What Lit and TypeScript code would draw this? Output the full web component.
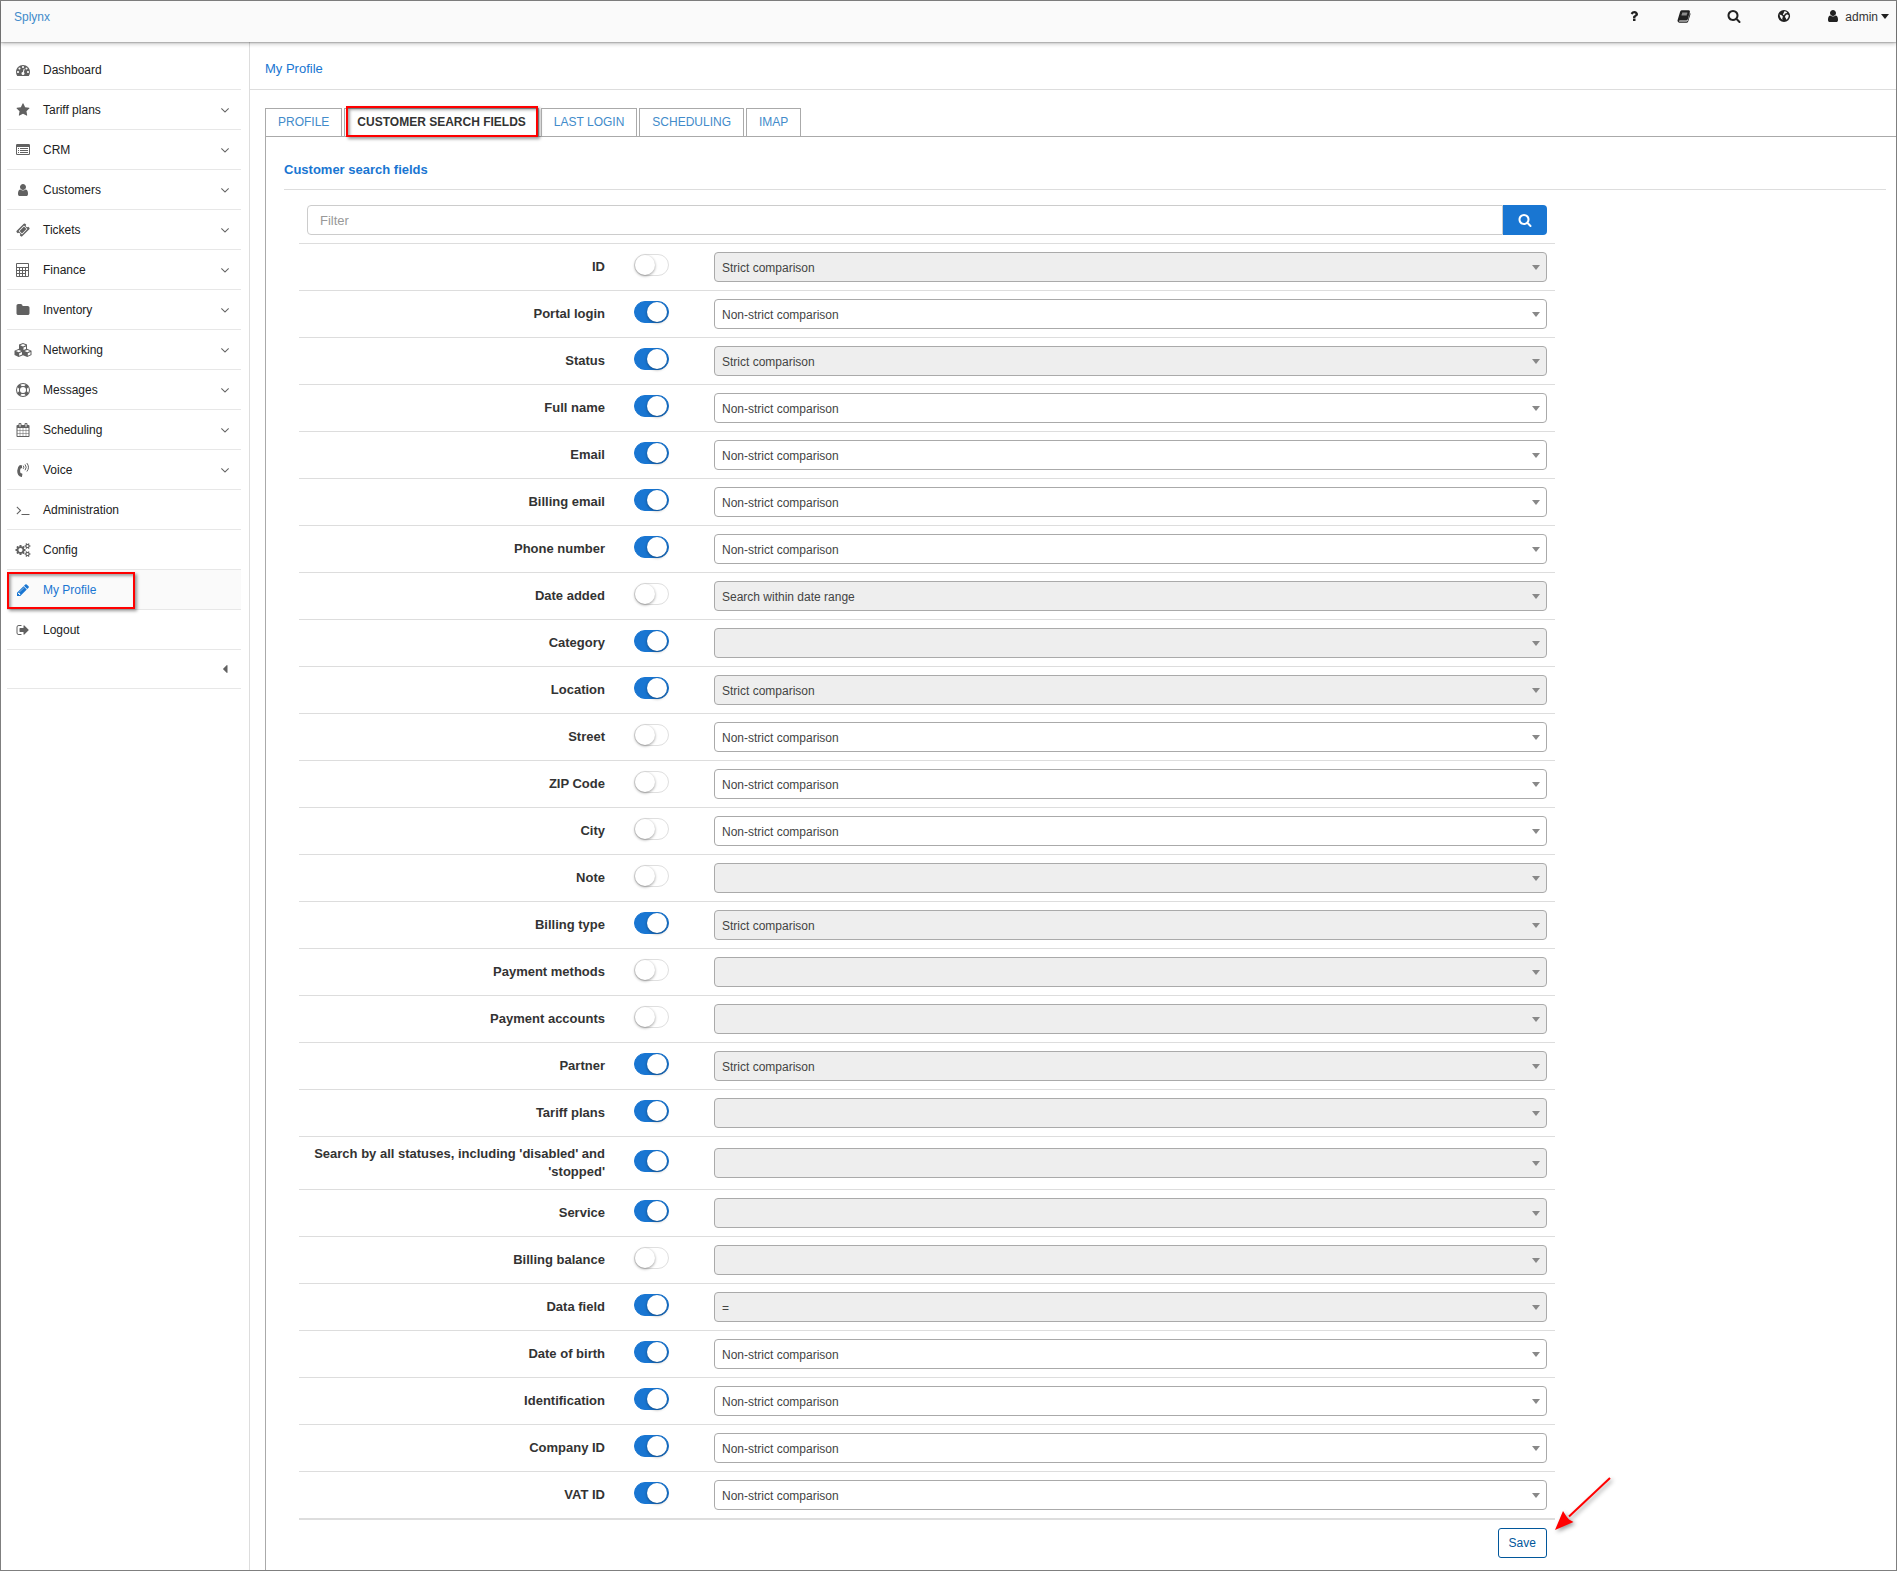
import { LitElement, html, css, svg, nothing } from "lit";
import { customElement, property, state } from "lit/decorators.js";
import { classMap } from "lit/directives/class-map.js";

type Glyph = { w: number; h: number; box: string; body: unknown };

const fa = (d: string, units = 1792): Glyph => ({
  w: units / 128,
  h: 14,
  box: `0 0 ${units} 1792`,
  body: svg`<path d=${d}></path>`,
});

const GLYPHS: Record<string, Glyph> = {
  dashboard: fa("M384 1152q0-53-37.5-90.5t-90.5-37.5-90.5 37.5-37.5 90.5 37.5 90.5 90.5 37.5 90.5-37.5 37.5-90.5zm192-448q0-53-37.5-90.5t-90.5-37.5-90.5 37.5-37.5 90.5 37.5 90.5 90.5 37.5 90.5-37.5 37.5-90.5zm428 481l101-382q6-26-7.5-48.5t-38.5-29.5-48 6.5-30 39.5l-101 382q-60 5-107 43.5t-63 98.5q-20 77 20 146t117 89 146-20 89-117q16-60-6-117t-72-91zm660-33q0-53-37.5-90.5t-90.5-37.5-90.5 37.5-37.5 90.5 37.5 90.5 90.5 37.5 90.5-37.5 37.5-90.5zm-640-640q0-53-37.5-90.5t-90.5-37.5-90.5 37.5-37.5 90.5 37.5 90.5 90.5 37.5 90.5-37.5 37.5-90.5zm448 192q0-53-37.5-90.5t-90.5-37.5-90.5 37.5-37.5 90.5 37.5 90.5 90.5 37.5 90.5-37.5 37.5-90.5zm320 448q0 261-141 483-19 29-54 29h-1402q-35 0-54-29-141-221-141-483 0-182 71-348t191-286 286-191 348-71 348 71 286 191 191 286 71 348z"),
  star: fa("M1728 647q0 22-26 48l-363 354 86 500q1 7 1 20 0 21-10.5 35.5t-30.5 14.5q-19 0-40-12l-449-236-449 236q-22 12-40 12-21 0-31.5-14.5t-10.5-35.5q0-6 2-20l86-500-364-354q-25-27-25-48 0-37 56-46l502-73 225-455q19-41 49-41t49 41l225 455 502 73q56 9 56 46z"),
  search: fa("M1216 832q0-185-131.5-316.5t-316.5-131.5-316.5 131.5-131.5 316.5 131.5 316.5 316.5 131.5 316.5-131.5 131.5-316.5zm512 832q0 52-38 90t-90 38q-54 0-90-38l-343-342q-179 124-399 124-143 0-273.5-55.5t-225-150-150-225-55.5-273.5 55.5-273.5 150-225 225-150 273.5-55.5 273.5 55.5 225 150 150 225 55.5 273.5q0 220-124 399l343 343q37 37 37 90z"),
  user: fa("M1536 1399q0 109-62.5 187t-150.5 78h-854q-88 0-150.5-78t-62.5-187q0-85 8.5-160.5t31.5-152 58.5-131 94-89 134.5-34.5q131 128 313 128t313-128q76 0 134.5 34.5t94 89 58.5 131 31.5 152 8.5 160.5zm-256-887q0 159-112.5 271.5t-271.5 112.5-271.5-112.5-112.5-271.5 112.5-271.5 271.5-112.5 271.5 112.5 112.5 271.5z"),
  folder: fa("M1728 608v704q0 92-66 158t-158 66h-1216q-92 0-158-66t-66-158v-960q0-92 66-158t158-66h320q92 0 158 66t66 158v32h672q92 0 158 66t66 158z"),
  ticket: fa("M1024 452l316 316-572 572-316-316zm-211 979l618-618q19-19 19-45t-19-45l-362-362q-18-18-45-18t-45 18l-618 618q-19 19-19 45t19 45l362 362q18 18 45 18t45-18zm889-637l-907 908q-37 37-90.5 37t-90.5-37l-126-126q56-56 56-136t-56-136-136-56-136 56l-125-126q-37-37-37-90.5t37-90.5l907-906q37-37 90.5-37t90.5 37l125 125q-56 56-56 136t56 136 136 56 136-56l126 125q37 37 37 90.5t-37 90.5z"),
  calendar: fa("M192 1664h288v-288h-288v288zm352 0h320v-288h-320v288zm-352-352h288v-320h-288v320zm352 0h320v-320h-320v320zm-352-384h288v-288h-288v288zm736 736h320v-288h-320v288zm-384-736h320v-288h-320v288zm768 736h288v-288h-288v288zm-384-352h320v-320h-320v320zm-352-864v-288q0-13-9.5-22.5t-22.5-9.5h-64q-13 0-22.5 9.5t-9.5 22.5v288q0 13 9.5 22.5t22.5 9.5h64q13 0 22.5-9.5t9.5-22.5zm736 864h288v-320h-288v320zm-384-384h320v-288h-320v288zm384 0h288v-288h-288v288zm32-480v-288q0-13-9.5-22.5t-22.5-9.5h-64q-13 0-22.5 9.5t-9.5 22.5v288q0 13 9.5 22.5t22.5 9.5h64q13 0 22.5-9.5t9.5-22.5zm384-64v1280q0 52-38 90t-90 38h-1408q-52 0-90-38t-38-90v-1280q0-52 38-90t90-38h128v-96q0-66 47-113t113-47h64q66 0 113 47t47 113v96h384v-96q0-66 47-113t113-47h64q66 0 113 47t47 113v96h128q52 0 90 38t38 90z"),
  terminal: fa("M649 983l-466 466q-10 10-23 10t-23-10l-50-50q-10-10-10-23t10-23l393-393-393-393q-10-10-10-23t10-23l50-50q10-10 23-10t23 10l466 466q10 10 10 23t-10 23zm1079 457v64q0 14-9 23t-23 9h-960q-14 0-23-9t-9-23v-64q0-14 9-23t23-9h960q14 0 23 9t9 23z"),
  cogs: fa("M832 896q0-106-75-181t-181-75-181 75-75 181 75 181 181 75 181-75 75-181zm768 512q0-52-38-90t-90-38-90 38-38 90q0 53 37.5 90.5t90.5 37.5 90.5-37.5 37.5-90.5zm0-1024q0-52-38-90t-90-38-90 38-38 90q0 53 37.5 90.5t90.5 37.5 90.5-37.5 37.5-90.5zm-384 421v185q0 10-7 19.5t-16 10.5l-155 24q-11 35-32 76 34 48 90 115 7 11 7 20 0 12-7 19-23 30-82.5 89.5t-78.5 59.5q-11 0-21-7l-115-90q-37 19-77 31-11 108-23 155-7 24-30 24h-186q-11 0-20-7.5t-10-17.5l-23-153q-34-10-75-31l-118 89q-7 7-20 7-11 0-21-8-144-133-144-160 0-9 7-19 10-14 41-53t47-61q-23-44-35-82l-152-24q-10-1-17-9.5t-7-19.5v-185q0-10 7-19.5t16-10.5l155-24q11-35 32-76-34-48-90-115-7-11-7-20 0-12 7-20 22-30 82-89t79-59q11 0 21 7l115 90q34-18 77-32 11-108 23-154 7-24 30-24h186q11 0 20 7.5t10 17.5l23 153q34 10 75 31l118-89q8-7 20-7 11 0 21 8 144 133 144 160 0 8-7 19-12 16-42 54t-45 60q23 48 34 82l152 23q10 2 17 10.5t7 19.5zm640 533v140q0 16-149 31-12 27-30 52 51 113 51 138 0 4-4 7-122 71-124 71-8 0-46-47t-52-68q-20 2-30 2t-30-2q-14 21-52 68t-46 47q-2 0-124-71-4-3-4-7 0-25 51-138-18-25-30-52-149-15-149-31v-140q0-16 149-31 13-29 30-52-51-113-51-138 0-4 4-7 4-2 35-20t59-34 30-16q8 0 46 46.5t52 67.5q20-2 30-2t30 2q51-71 92-112l6-2q4 0 124 70 4 3 4 7 0 25-51 138 17 23 30 52 149 15 149 31zm0-1024v140q0 16-149 31-12 27-30 52 51 113 51 138 0 4-4 7-122 71-124 71-8 0-46-47t-52-68q-20 2-30 2t-30-2q-14 21-52 68t-46 47q-2 0-124-71-4-3-4-7 0-25 51-138-18-25-30-52-149-15-149-31v-140q0-16 149-31 13-29 30-52-51-113-51-138 0-4 4-7 4-2 35-20t59-34 30-16q8 0 46 46.5t52 67.5q20-2 30-2t30 2q51-71 92-112l6-2q4 0 124 70 4 3 4 7 0 25-51 138 17 23 30 52 149 15 149 31z", 1920),
  pencil: fa("M491 1536l91-91-235-235-91 91v107h128v128h107zm523-928q0-22-22-22-10 0-17 7l-542 542q-7 7-7 17 0 22 22 22 10 0 17-7l542-542q7-7 7-17zm-54-192l416 416-832 832h-416v-416zm683 96q0 53-37 90l-166 166-416-416 166-165q36-38 90-38 53 0 91 38l235 234q37 39 37 91z"),
  signout: fa("M704 1440q0 4 1 20t.5 26.5-3 23.5-10 19.5-20.5 6.5h-320q-119 0-203.5-84.5t-84.5-203.5v-704q0-119 84.5-203.5t203.5-84.5h320q13 0 22.5 9.5t9.5 22.5q0 4 1 20t.5 26.5-3 23.5-10 19.5-20.5 6.5h-320q-66 0-113 47t-47 113v704q0 66 47 113t113 47h312l11.5 1 11.5 3 8 5.5 7 9 2 13.5zm928-544q0 26-19 45l-544 544q-19 19-45 19t-45-19-19-45v-288h-448q-26 0-45-19t-19-45v-384q0-26 19-45t45-19h448v-288q0-26 19-45t45-19 45 19l544 544q19 19 19 45z"),
  question: fa("M1088 1256v240q0 16-12 28t-28 12h-240q-16 0-28-12t-12-28v-240q0-16 12-28t28-12h240q16 0 28 12t12 28zm316-600q0 54-15.5 101t-35 76.5-55 59.5-57.5 43.5-61 35.5q-41 23-68.5 65t-27.5 67q0 17-12 32.5t-28 15.5h-240q-15 0-25.5-18.5t-10.5-37.5v-45q0-83 65-156.5t143-108.5q59-27 84-56t25-76q0-42-46.5-74t-107.5-32q-65 0-108 29-35 25-107 115-13 16-31 16-12 0-25-8l-164-125q-13-10-15.5-25t5.5-28q160-266 464-266 80 0 161 31t146 83 106 127.5 41 158.5z"),
  down: fa("M1395 736q0 13-10 23l-466 466q-10 10-23 10t-23-10l-466-466q-10-10-10-23t10-23l50-50q10-10 23-10t23 10l393 393 393-393q10-10 23-10t23 10l50 50q10 10 10 23z"),
  left: fa("M1216 448v896q0 26-19 45t-45 19-45-19l-448-448q-19-19-19-45t19-45l448-448q19-19 45-19t45 19 19 45z"),
  list: {
    w: 14, h: 14, box: "0 0 14 14",
    body: svg`<path fill-rule="evenodd" d="M1.200 1h11.600Q14 1 14 2.200v8.600q0 1.200-1.200 1.200H1.200Q0 12 0 10.800V2.200Q0 1 1.200 1zM1 4v6.600q0 .4.4.4h11.200q.4 0 .4-.4V4z"></path><path d="M2 5h1v1H2zM4 5h8v1H4zM2 7h1v1H2zM4 7h8v1H4zM2 9h1v1H2zM4 9h8v1H4z"></path>`,
  },
  calculator: {
    w: 14, h: 14, box: "0 0 14 14",
    body: svg`<path fill-rule="evenodd" d="M1 0h11q1 0 1 1v12q0 1-1 1H1q-1 0-1-1V1q0-1 1-1zM1 1v3h11V1zM1 5v2h2V5zM4 5v2h2V5zM7 5v2h2V5zM10 5v2h2V5zM1 8v2h2V8zM4 8v2h2V8zM7 8v2h2V8zM1 11v2h2v-2zM4 11v2h2v-2zM7 11v2h2v-2zM10 8v5h2V8z"></path>`,
  },
  cubes: {
    w: 18, h: 14, box: "0 0 18 14",
    body: svg`<path fill-rule="evenodd" d="M9 0l4 1.600v4.200L17.500 7.800v4.200L13.300 14 9 12.200 4.700 14 .5 12V7.800L5 5.800V1.600zM9 1L6.200 2.200 9 3.400l2.800-1.200zM9.500 4.500v2.600L12 6V3.400zM4.700 6.900L1.900 8.100l2.800 1.200 2.800-1.200zM5.200 10.300v2.500l2.800-1.200V9.100zM13.300 6.900l-2.800 1.200 2.800 1.200 2.800-1.200zM13.800 10.300v2.500l2.700-1.200V9.100z"></path>`,
  },
  ring: {
    w: 14, h: 14, box: "0 0 14 14",
    body: svg`<path fill-rule="evenodd" d="M7 0a7 7 0 1 1 0 14A7 7 0 0 1 7 0zM7 4a3 3 0 1 0 0 6 3 3 0 0 0 0-6zM4.300 1.650l1.500 1.500a4 4 0 0 1 2.400 0l1.500-1.500a6 6 0 0 0-5.400 0zM4.300 12.350a6 6 0 0 0 5.400 0l-1.500-1.500a4 4 0 0 1-2.400 0zM1.650 4.300a6 6 0 0 0 0 5.400l1.500-1.500a4 4 0 0 1 0-2.400zM12.350 4.300l-1.500 1.500a4 4 0 0 1 0 2.400l1.500 1.500a6 6 0 0 0 0-5.400z"></path>`,
  },
  phone: {
    w: 14, h: 14, box: "0 0 14 14",
    body: svg`<path d="M3.600 2.300L5.300 2q.4 0 .5.400l.4 2q.1.400-.3.600L4.400 5.700q-.7 2.200.1 4.400l1.500.5q.4.200.4.600l-.4 2.300q-.1.500-.6.500Q1.200 13 1.200 7.800q0-3.800 2.400-5.500z"></path><g fill="none" stroke="currentColor" stroke-width="1" stroke-linecap="round"><path d="M7.500 3q1 1.200 0 2.500"></path><path d="M9.300 1.700q2 2.500 0 5.200"></path><path d="M11.100.4q3 3.800 0 7.800"></path></g>`,
  },
  book: {
    w: 14, h: 14, box: "0 0 14 14",
    body: svg`<path fill-rule="evenodd" d="M4.600 1.200h7.200q1.500.2 1.100 1.700l-2.100 7.400q-.4 1.300-1.700 1.300H2.700q-.8 0-.9.400.1.500.9.500h6.900q.8 0 1.100-.8l2.200-7.600q.8.500.5 1.400l-2.200 6.900q-.4 1.300-1.700 1.300H2.300Q.6 13.500.5 11.800q0-.8.300-1.400L3.100 2.700q.4-1.300 1.500-1.500zM5.200 3.700l-.2.800h5.200l.2-.8zM4.700 5.500l-.2.800h5.200l.2-.8z"></path>`,
  },
  globe: {
    w: 14, h: 14, box: "0 0 14 14",
    body: svg`<path fill-rule="evenodd" d="M7 .9a6.100 6.100 0 1 1 0 12.200A6.100 6.100 0 0 1 7 .9zM7.300 2.300l1.500.1 1.400.9-.9 1-1.300.3-.6 1.200-1.100.5-.4-1 .8-1.200zM9 5.700l1.600-.3 1.200 1.100-.4 1.800-1.300 1.900-1 .3-.3-1.600-1-1zM2.600 5.200l1.200.9 1.300.5.900 1.300-.8 1.200.4 1.700q-2.600-1.300-3-5.600z"></path>`,
  },
};

@customElement("ui-icon")
class UiIcon extends LitElement {
  static styles = css`
    :host { display: inline-flex; align-items: center; justify-content: center; flex: none; }
    .glyph { display: block; fill: currentColor; overflow: visible; }
  `;
  @property() name = "";
  render() {
    const g = GLYPHS[this.name];
    if (!g) return nothing;
    return html`<svg class="glyph" width=${g.w} height=${g.h} viewBox=${g.box} aria-hidden="true">${g.body}</svg>`;
  }
}

@customElement("top-bar")
class TopBar extends LitElement {
  static styles = css`
    :host { display: block; position: relative; z-index: 1; }
    .bar {
      display: flex; justify-content: space-between; align-items: flex-start;
      height: 41px; padding: 0 7px 0 13px; background: #fafafa;
      box-shadow: 0 1px 1px rgba(0, 0, 0, 0.16), 0 2px 4px rgba(0, 0, 0, 0.22);
      font-size: 12px; line-height: 32px;
    }
    .brand { color: #428bca; text-decoration: none; }
    .tools { display: flex; align-items: center; height: 32px; color: #212121; }
    .tool, .account {
      display: flex; align-items: center; justify-content: center; height: 32px; padding: 0;
      border: 0; background: none; color: inherit; font: inherit; cursor: pointer;
    }
    .tool { width: 50px; padding-bottom: 2px; }
    .account { margin-left: 17px; color: #333; }
    .person { color: #212121; margin: 0 5px 2px 0; }
    .caret { margin: 0 0 2px 3px; border: 4px solid transparent; border-top: 5px solid #212121; border-bottom: 0; }
  `;
  render() {
    const tools = [["question", "Help"], ["book", "Documentation"], ["search", "Search"], ["globe", "Language"]];
    return html`
      <header class="bar">
        <a class="brand" href="#">Splynx</a>
        <div class="tools">
          ${tools.map(([icon, label]) => html`<button class="tool" type="button" aria-label=${label}><ui-icon name=${icon}></ui-icon></button>`)}
          <button class="account" type="button"><ui-icon class="person" name="user"></ui-icon>admin<span class="caret"></span></button>
        </div>
      </header>
    `;
  }
}

const MENU: [string, string, boolean][] = [
  ["dashboard", "Dashboard", false],
  ["star", "Tariff plans", true],
  ["list", "CRM", true],
  ["user", "Customers", true],
  ["ticket", "Tickets", true],
  ["calculator", "Finance", true],
  ["folder", "Inventory", true],
  ["cubes", "Networking", true],
  ["ring", "Messages", true],
  ["calendar", "Scheduling", true],
  ["phone", "Voice", true],
  ["terminal", "Administration", false],
  ["cogs", "Config", false],
  ["pencil", "My Profile", false],
  ["signout", "Logout", false],
];

@customElement("side-menu")
class SideMenu extends LitElement {
  static styles = css`
    :host { display: block; flex: none; width: 249px; box-sizing: border-box; border-right: 1px solid #ddd; }
    .list { list-style: none; margin: 0; padding: 8px 8px 0 6px; }
    .item { position: relative; border-bottom: 1px solid #e7e7e7; }
    .link {
      display: flex; align-items: center; height: 39px; color: #212121;
      font-size: 12px; text-decoration: none;
    }
    .icon { width: 32px; margin-right: 4px; color: #616161; }
    .text { flex: 1; }
    .arrow { width: 32px; color: #616161; }
    .active { background: #fafafa; }
    .active .link, .active .icon { color: #1976d2; }
    .mark {
      position: absolute; left: 0; top: 2px; width: 128px; height: 37px; box-sizing: border-box;
      border: 2px solid #f00; pointer-events: none;
      box-shadow: 2px 2px 3px rgba(0, 0, 0, 0.4), inset 2px 2px 3px rgba(0, 0, 0, 0.35);
    }
    .fold {
      display: flex; align-items: center; justify-content: flex-end; width: 100%; height: 38px;
      padding: 0; border: 0; background: none; cursor: pointer;
    }
  `;
  render() {
    return html`
      <nav aria-label="Main">
        <ul class="list">
          ${MENU.map(([icon, label, sub]) => {
            const active = label === "My Profile";
            return html`
              <li class=${classMap({ item: true, active })}>
                <a class="link" href="#">
                  <ui-icon class="icon" name=${icon}></ui-icon>
                  <span class="text">${label}</span>
                  ${sub ? html`<ui-icon class="arrow" name="down"></ui-icon>` : nothing}
                </a>
                ${active ? html`<div class="mark"></div>` : nothing}
              </li>
            `;
          })}
          <li class="item"><button class="fold" type="button" aria-label="Collapse menu"><ui-icon class="arrow" name="left"></ui-icon></button></li>
        </ul>
      </nav>
    `;
  }
}

interface Field { label: string; on: boolean; mode: string; locked: boolean }

const STRICT = "Strict comparison";
const LOOSE = "Non-strict comparison";
const f = (label: string, on: boolean, mode: string, locked: boolean): Field => ({ label, on, mode, locked });

const FIELDS: Field[] = [
  f("ID", false, STRICT, true),
  f("Portal login", true, LOOSE, false),
  f("Status", true, STRICT, true),
  f("Full name", true, LOOSE, false),
  f("Email", true, LOOSE, false),
  f("Billing email", true, LOOSE, false),
  f("Phone number", true, LOOSE, false),
  f("Date added", false, "Search within date range", true),
  f("Category", true, "", true),
  f("Location", true, STRICT, true),
  f("Street", false, LOOSE, false),
  f("ZIP Code", false, LOOSE, false),
  f("City", false, LOOSE, false),
  f("Note", false, "", true),
  f("Billing type", true, STRICT, true),
  f("Payment methods", false, "", true),
  f("Payment accounts", false, "", true),
  f("Partner", true, STRICT, true),
  f("Tariff plans", true, "", true),
  f("Search by all statuses, including 'disabled' and 'stopped'", true, "", true),
  f("Service", true, "", true),
  f("Billing balance", false, "", true),
  f("Data field", true, "=", true),
  f("Date of birth", true, LOOSE, false),
  f("Identification", true, LOOSE, false),
  f("Company ID", true, LOOSE, false),
  f("VAT ID", true, LOOSE, false),
];

@customElement("search-fields")
class SearchFields extends LitElement {
  static styles = css`
    :host { display: block; }
    .title { margin: 0; padding: 23px 0 10px; border-bottom: 1px solid #ddd; color: #1976d2; font-size: 13px; line-height: 19px; font-weight: bold; }
    .form { width: 78.4%; margin-left: 15px; }
    .filter { display: flex; padding: 15px 8px 8px; }
    .filter-input {
      flex: 1; min-width: 0; height: 30px; box-sizing: border-box; padding: 0 12px; border: 1px solid #ccc;
      border-radius: 4px 0 0 4px; background: #fff; color: #555; font: 13px "Liberation Sans", sans-serif; outline: 0;
    }
    .filter-input::placeholder { color: #999; opacity: 1; }
    .filter-button {
      display: flex; align-items: center; justify-content: center; width: 44px; height: 30px; padding: 0;
      border: 0; border-radius: 0 4px 4px 0; background: #1976d2; color: #fff; cursor: pointer;
    }
    .rows { border-bottom: 1px solid #ddd; }
    .row { display: grid; grid-template-columns: 25% 93px 1fr; align-items: center; padding: 8px 0; border-top: 1px solid #ddd; }
    .label { padding: 0 8px; color: #333; font-size: 13px; line-height: 18px; font-weight: bold; text-align: right; }
    .switch {
      appearance: none; position: relative; width: 35px; height: 22px; margin: 0 0 4px 21px; box-sizing: border-box;
      border: 1px solid #dfdfdf; border-radius: 11px; background: #fff; cursor: pointer;
    }
    .switch::before {
      content: ""; position: absolute; left: 0; top: 0; width: 20px; height: 20px; border-radius: 50%;
      background: #fff; box-shadow: 0 1px 3px rgba(0, 0, 0, 0.4);
    }
    .switch:checked { border-color: #1976d2; background: #1976d2; }
    .switch:checked::before { left: 12px; }
    .pick { display: grid; align-items: center; padding: 0 8px; }
    .select {
      grid-area: 1 / 1; appearance: none; width: 100%; height: 30px; box-sizing: border-box; margin: 0; padding: 1px 24px 0 7px;
      border: 1px solid #aaa; border-radius: 4px; background: #fff; color: #444; opacity: 1;
      font: 12px "Liberation Sans", sans-serif;
    }
    .select:disabled { background: #eee; }
    .caret { grid-area: 1 / 1; justify-self: end; margin-right: 7px; border: 4px solid transparent; border-top: 5px solid #888; border-bottom: 0; pointer-events: none; }
    .actions { position: relative; display: flex; justify-content: flex-end; padding: 8px 8px 12px; border-top: 1px solid #ddd; }
    .save {
      height: 30px; padding: 0 10px; border: 1px solid #01579b; border-radius: 3px; background: #fff;
      color: #01579b; font: 12px "Liberation Sans", sans-serif; cursor: pointer;
    }
    .pointer { position: absolute; left: 100%; top: -44px; overflow: visible; filter: drop-shadow(2px 2px 2px rgba(0, 0, 0, 0.4)); pointer-events: none; }
  `;
  @state() fields = FIELDS;
  toggle(i: number) {
    this.fields = this.fields.map((x, n) => (n === i ? { ...x, on: !x.on } : x));
  }
  options(x: Field) {
    return x.locked ? [x.mode] : [LOOSE, STRICT];
  }
  render() {
    return html`
      <h2 class="title">Customer search fields</h2>
      <form class="form" @submit=${(e: Event) => e.preventDefault()}>
        <div class="filter">
          <input class="filter-input" type="text" placeholder="Filter" aria-label="Filter" />
          <button class="filter-button" type="button" aria-label="Search"><ui-icon name="search"></ui-icon></button>
        </div>
        <div class="rows">
          ${this.fields.map((x, i) => html`
            <div class="row">
              <label class="label" for="on-${i}">${x.label}</label>
              <input class="switch" type="checkbox" id="on-${i}" .checked=${x.on} @change=${() => this.toggle(i)} />
              <div class="pick">
                <select class="select" aria-label="${x.label} comparison" ?disabled=${x.locked}>
                  ${this.options(x).map((o) => html`<option ?selected=${o === x.mode}>${o}</option>`)}
                </select>
                <span class="caret"></span>
              </div>
            </div>
          `)}
        </div>
        <div class="actions">
          <button class="save" type="submit">Save</button>
          <svg class="pointer" width="58" height="56" viewBox="0 0 58 56" aria-hidden="true">
            <path d="M55 2L14 40.500" fill="none" stroke="#f00" stroke-width="2"></path>
            <path d="M0 54L8 35l3.500 5.500 2.500 3 4.500 2.500z" fill="#f00"></path>
          </svg>
        </div>
      </form>
    `;
  }
}

@customElement("app-root")
class AppRoot extends LitElement {
  static styles = css`
    :host { display: block; font-family: "Liberation Sans", Arial, sans-serif; color: #212121; }
    .frame { display: flex; flex-direction: column; min-height: 100vh; box-sizing: border-box; border: 1px solid #7f7f7f; background: #fff; }
    .body { display: flex; flex: 1; }
    .main { flex: 1; min-width: 0; display: flex; flex-direction: column; }
    .heading { margin: 0; padding: 0 15px; height: 47px; border-bottom: 1px solid #ddd; color: #1976d2; font-size: 13px; line-height: 53px; font-weight: normal; }
    .tabs { display: flex; gap: 2px; margin: 18px 0 0 15px; }
    .tab {
      position: relative; height: 28px; padding: 0 12px; border: 1px solid #aaa; border-bottom: 0; box-sizing: border-box;
      font-size: 12px; line-height: 27px; color: #428bca; text-decoration: none; white-space: nowrap;
    }
    .current { color: #333; font-weight: bold; }
    .mark {
      position: absolute; left: 1px; top: -3px; right: 0; height: 31px; box-sizing: border-box; border: 2px solid #f00; pointer-events: none;
      box-shadow: 2px 2px 3px rgba(0, 0, 0, 0.4), inset 2px 2px 3px rgba(0, 0, 0, 0.35);
    }
    .panel { flex: 1; margin-left: 15px; padding: 0 10px 0 18px; border-top: 1px solid #aaa; border-left: 1px solid #aaa; }
  `;
  render() {
    const tabs = ["PROFILE", "CUSTOMER SEARCH FIELDS", "LAST LOGIN", "SCHEDULING", "IMAP"];
    return html`
      <div class="frame">
        <top-bar></top-bar>
        <div class="body">
          <side-menu></side-menu>
          <main class="main">
            <h1 class="heading">My Profile</h1>
            <nav class="tabs" aria-label="Profile sections">
              ${tabs.map((t, i) => html`<a class=${classMap({ tab: true, current: i === 1 })} href="#">${t}${i === 1 ? html`<span class="mark"></span>` : nothing}</a>`)}
            </nav>
            <section class="panel"><search-fields></search-fields></section>
          </main>
        </div>
      </div>
    `;
  }
}
